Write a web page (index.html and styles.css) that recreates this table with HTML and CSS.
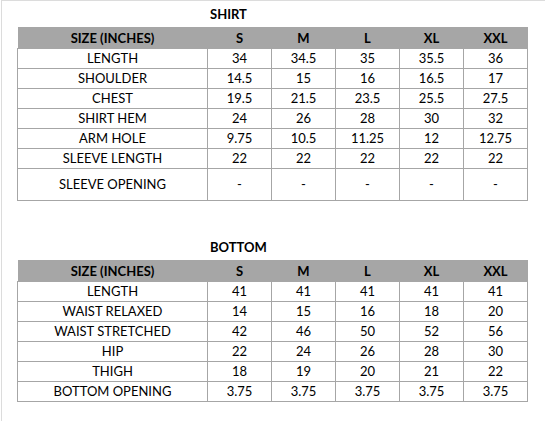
FILE: index.html
```html
<!DOCTYPE html>
<html>
<head>
<meta charset="utf-8">
<link rel="stylesheet" href="styles.css">
</head>
<body>
<div class="sheet">
  <div class="title">SHIRT</div>
  <table class="chart">
    <colgroup><col class="c-label"><col class="c-size"><col class="c-size"><col class="c-size"><col class="c-size"><col class="c-size"></colgroup>
    <thead>
      <tr><th>SIZE (INCHES)</th><th>S</th><th>M</th><th>L</th><th>XL</th><th>XXL</th></tr>
    </thead>
    <tbody>
      <tr><td>LENGTH</td><td>34</td><td>34.5</td><td>35</td><td>35.5</td><td>36</td></tr>
      <tr><td>SHOULDER</td><td>14.5</td><td>15</td><td>16</td><td>16.5</td><td>17</td></tr>
      <tr><td>CHEST</td><td>19.5</td><td>21.5</td><td>23.5</td><td>25.5</td><td>27.5</td></tr>
      <tr><td>SHIRT HEM</td><td>24</td><td>26</td><td>28</td><td>30</td><td>32</td></tr>
      <tr><td>ARM HOLE</td><td>9.75</td><td>10.5</td><td>11.25</td><td>12</td><td>12.75</td></tr>
      <tr><td>SLEEVE LENGTH</td><td>22</td><td>22</td><td>22</td><td>22</td><td>22</td></tr>
      <tr class="tall"><td>SLEEVE OPENING</td><td>-</td><td>-</td><td>-</td><td>-</td><td>-</td></tr>
    </tbody>
  </table>
  <div class="title title-bottom">BOTTOM</div>
  <table class="chart">
    <colgroup><col class="c-label"><col class="c-size"><col class="c-size"><col class="c-size"><col class="c-size"><col class="c-size"></colgroup>
    <thead>
      <tr><th>SIZE (INCHES)</th><th>S</th><th>M</th><th>L</th><th>XL</th><th>XXL</th></tr>
    </thead>
    <tbody>
      <tr><td>LENGTH</td><td>41</td><td>41</td><td>41</td><td>41</td><td>41</td></tr>
      <tr><td>WAIST RELAXED</td><td>14</td><td>15</td><td>16</td><td>18</td><td>20</td></tr>
      <tr><td>WAIST STRETCHED</td><td>42</td><td>46</td><td>50</td><td>52</td><td>56</td></tr>
      <tr><td>HIP</td><td>22</td><td>24</td><td>26</td><td>28</td><td>30</td></tr>
      <tr><td>THIGH</td><td>18</td><td>19</td><td>20</td><td>21</td><td>22</td></tr>
      <tr><td>BOTTOM OPENING</td><td>3.75</td><td>3.75</td><td>3.75</td><td>3.75</td><td>3.75</td></tr>
    </tbody>
  </table>
</div>
</body>
</html>
```
FILE: styles.css
```css
html, body {
  margin: 0;
  padding: 0;
  background: #ffffff;
}
body {
  font-family: Lato, "Open Sans", "Liberation Sans", sans-serif;
  color: #000000;
}
.sheet {
  margin-left: 1px;
  height: 421px;
  box-sizing: border-box;
  border-top: 1px solid #dcdcdc;
  border-left: 1px solid #dcdcdc;
  padding-left: 15px;
}
.title {
  height: 26px;
  line-height: 26px;
  padding-left: 193px;
  font-size: 13px;
  font-weight: bold;
}
.title-bottom {
  margin-top: 33px;
}
.chart {
  border-collapse: collapse;
  table-layout: fixed;
  width: 511px;
  font-size: 13px;
}
.c-label { width: 190px; }
.c-size { width: 64px; }
.chart th {
  background: #a6a6a6;
  font-weight: bold;
  height: 21px;
  padding: 0;
  text-align: center;
  border: 0;
}
.chart td {
  height: 19px;
  padding: 0;
  text-align: center;
  border: 1px solid #a6a6a6;
  line-height: 19px;
}
.chart tr.tall td {
  height: 31px;
}
```
